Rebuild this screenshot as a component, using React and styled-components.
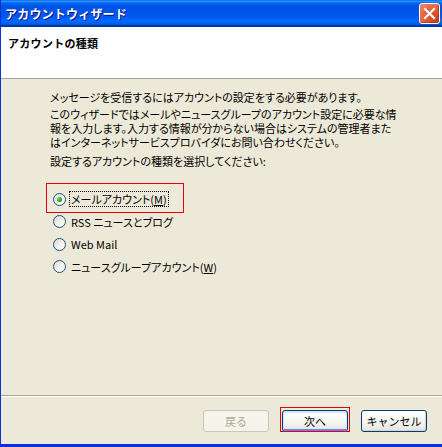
import styled, {createGlobalStyle} from 'styled-components';

const GlobalStyle = createGlobalStyle`
  html, body {
    margin: 0;
    padding: 0;
    background: #ece9d8;
  }
  body {
    font-family: "Noto Sans CJK JP", "Liberation Sans", sans-serif;
  }
`;

const uiFont = `"Noto Sans CJK JP", "Liberation Sans", sans-serif`;

const Window = styled.div`
  width: 442px;
  height: 447px;
  box-sizing: border-box;
  display: flex;
  flex-direction: column;
  border-left: 1px solid #0831d9;
  border-bottom: 3px solid #0831d9;
  background: #ece9d8;
  font-family: ${uiFont};
  overflow: hidden;
`;

const TitleBar = styled.div`
  height: 27px;
  flex-shrink: 0;
  display: flex;
  align-items: center;
  justify-content: space-between;
  padding: 0 2px 0 4px;
  background: linear-gradient(
    to bottom,
    #0058ee 0%,
    #3593ff 4%,
    #288eff 6%,
    #127dff 8%,
    #036ffc 10%,
    #0262ee 14%,
    #0057e5 20%,
    #0054e3 24%,
    #0055eb 56%,
    #005bf5 66%,
    #026afe 76%,
    #0062ef 86%,
    #0052d6 92%,
    #0040ab 94%,
    #003092 100%
  );
`;

const TitleText = styled.div`
  color: #fff;
  font-size: 12px;
  font-weight: 700;
  letter-spacing: 0.2px;
  text-shadow: 1px 1px #0f1089;
`;

const CloseButton = styled.div`
  width: 21px;
  height: 21px;
  box-sizing: border-box;
  border: 1px solid #fff;
  border-radius: 3px;
  display: flex;
  align-items: center;
  justify-content: center;
  background: radial-gradient(circle at 80% 85%, #cc4622 0%, #e25a35 45%, #f28a66 100%);
  box-shadow: inset -1px -1px 1px rgba(140, 30, 0, 0.5);
`;

const Header = styled.div`
  height: 52px;
  flex-shrink: 0;
  box-sizing: border-box;
  background: #fff;
  padding: 9px 0 0 7px;
  border-bottom: 1px solid #aca899;
`;

const HeaderTitle = styled.div`
  font-size: 11px;
  font-weight: 700;
  line-height: 14px;
  letter-spacing: 0.3px;
  color: #000;
`;

const Body = styled.div`
  flex: 1;
  padding: 11px 0 0 49px;
  font-size: 11px;
  color: #000;
`;

const Paragraph = styled.p`
  margin: 0 0 ${(p) => p.$gap}px 0;
  line-height: 14px;
  font-feature-settings: "palt";
  white-space: nowrap;
`;

const RadioGroup = styled.div`
  margin-top: 20px;
  display: flex;
  flex-direction: column;
`;

const RadioRow = styled.label`
  position: relative;
  height: 22.5px;
  display: flex;
  align-items: center;
  gap: 3px;
  padding-left: 3px;
  font-size: 11px;
  font-feature-settings: "palt";
`;

const RadioCircle = styled.span`
  width: 13px;
  height: 13px;
  box-sizing: border-box;
  border-radius: 50%;
  border: 1px solid #1c5180;
  background: linear-gradient(135deg, #dcdbd3 0%, #f4f3ee 60%, #ffffff 100%);
  display: flex;
  align-items: center;
  justify-content: center;
  flex-shrink: 0;

  &::after {
    content: '';
    width: 5px;
    height: 5px;
    border-radius: 50%;
    background: radial-gradient(circle at 35% 35%, #5ee25e 0%, #21a121 60%, #1a8a1a 100%);
    display: ${(p) => (p.$checked ? 'block' : 'none')};
  }
`;

const RadioLabel = styled.span`
  border: 1px dotted ${(p) => (p.$focused ? '#000' : 'transparent')};
  padding: 0 1px;
  line-height: 14px;
  white-space: nowrap;
`;

const Mnemonic = styled.span`
  text-decoration: underline;
`;

const Highlight = styled.div`
  position: absolute;
  left: -4px;
  top: -5px;
  width: 138px;
  height: 30px;
  box-sizing: border-box;
  border: 1px solid #e3000b;
  pointer-events: none;
`;

const Footer = styled.div`
  height: 49px;
  flex-shrink: 0;
  box-sizing: border-box;
  border-top: 1px solid #aca899;
  box-shadow: inset 0 1px 0 #fff;
  display: flex;
  justify-content: flex-end;
  align-items: flex-start;
  gap: 13px;
  padding: 14px 15px 0 0;
`;

const ButtonWrap = styled.div`
  position: relative;
  display: flex;
`;

const Button = styled.button`
  width: 66px;
  height: 22px;
  box-sizing: border-box;
  border-radius: 3px;
  font-family: ${uiFont};
  font-size: 11px;
  line-height: 14px;
  padding: 0;
  display: block;
  border: 1px solid ${(p) => (p.disabled ? '#c9c7ba' : '#003c74')};
  color: ${(p) => (p.disabled ? '#aca899' : '#000')};
  background: ${(p) =>
    p.disabled
      ? '#f5f4ea'
      : 'linear-gradient(to bottom, #ffffff 0%, #f4f4f0 60%, #e3e2da 100%)'};
  box-shadow: ${(p) =>
    p.$default
      ? 'inset 0 1px 0 1px #cee7ff, inset 0 -1px 0 1px #6982ee'
      : p.disabled
      ? 'none'
      : 'inset -1px -1px 0 #d8d5c6'};
`;

const ButtonMark = styled.div`
  position: absolute;
  left: -2px;
  top: -3px;
  right: -2px;
  bottom: 0;
  border: 1px solid #e3000b;
  pointer-events: none;
`;

const CloseIcon = () => (
  <svg width="13" height="13" viewBox="0 0 13 13">
    <path d="M2 2 L11 11 M11 2 L2 11" stroke="#fff" strokeWidth="2.2" strokeLinecap="square" />
  </svg>
);

const options = [
  {label: 'メールアカウント', key: 'M', checked: true},
  {label: 'RSS ニュースとブログ'},
  {label: 'Web Mail'},
  {label: 'ニュースグループアカウント', key: 'W'},
];

export default function App() {
  return (
    <>
      <GlobalStyle />
      <Window>
        <TitleBar>
          <TitleText>アカウントウィザード</TitleText>
          <CloseButton>
            <CloseIcon />
          </CloseButton>
        </TitleBar>
        <Header>
          <HeaderTitle>アカウントの種類</HeaderTitle>
        </Header>
        <Body>
          <Paragraph $gap={3}>
            メッセージを受信するにはアカウントの設定をする必要があります。
          </Paragraph>
          <Paragraph $gap={5}>
            このウィザードではメールやニュースグループのアカウント設定に必要な情
            <br />
            報を入力します。入力する情報が分からない場合はシステムの管理者また
            <br />
            はインターネットサービスプロバイダにお問い合わせください。
          </Paragraph>
          <Paragraph $gap={0}>設定するアカウントの種類を選択してください:</Paragraph>
          <RadioGroup>
            {options.map((o) => (
              <RadioRow key={o.label}>
                {o.checked && <Highlight />}
                <RadioCircle $checked={o.checked} />
                <RadioLabel $focused={o.checked}>
                  {o.label}
                  {o.key && (
                    <>
                      (<Mnemonic>{o.key}</Mnemonic>)
                    </>
                  )}
                </RadioLabel>
              </RadioRow>
            ))}
          </RadioGroup>
        </Body>
        <Footer>
          <Button disabled>戻る</Button>
          <ButtonWrap>
            <Button $default>次へ</Button>
            <ButtonMark />
          </ButtonWrap>
          <Button>キャンセル</Button>
        </Footer>
      </Window>
    </>
  );
}
